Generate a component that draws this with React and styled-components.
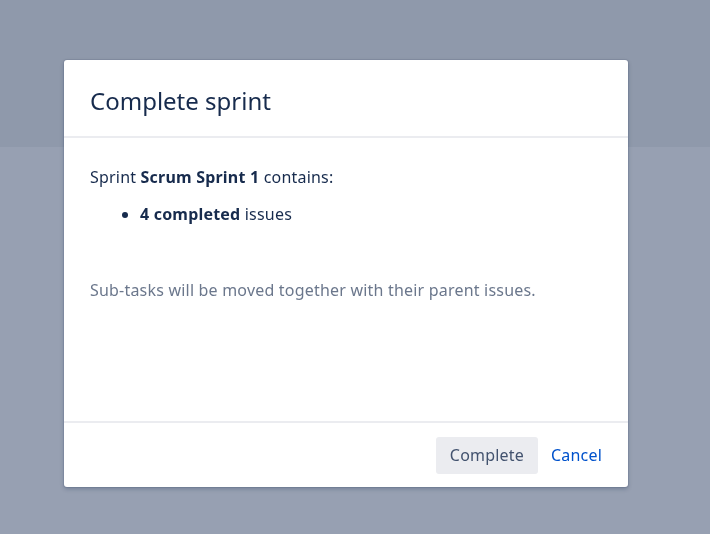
import React from 'react';
import styled, { createGlobalStyle } from 'styled-components';

const GlobalStyle = createGlobalStyle`
  html, body {
    margin: 0;
    padding: 0;
    height: 100%;
  }
  body {
    font-family: "Noto Sans", "Open Sans", sans-serif;
    background: #97a0b2;
  }
  #root {
    height: 100%;
  }
`;

const Page = styled.div`
  height: 100%;
  display: flex;
  flex-direction: column;
  background: #97a0b2;
`;

const PageHeader = styled.div`
  height: 147px;
  flex-shrink: 0;
  background: #8f99ab;
`;

const Dialog = styled.div`
  position: fixed;
  top: 60px;
  left: 64px;
  width: 564px;
  height: 427px;
  background: #fff;
  border-radius: 3px;
  box-shadow: 0 0 0 1px rgba(9, 30, 66, 0.08), 0 2px 4px rgba(9, 30, 66, 0.25);
  display: flex;
  flex-direction: column;
  color: #172b4d;
`;

const DialogHeader = styled.div`
  height: 78px;
  box-sizing: border-box;
  padding: 4px 26px 0;
  display: flex;
  align-items: center;
  border-bottom: 2px solid #ebecf0;
`;

const Title = styled.h2`
  margin: 0;
  font-size: 24px;
  font-weight: 400;
  color: #172b4d;
`;

const DialogBody = styled.div`
  flex: 1;
  padding: 27px 26px 0;
  font-size: 16px;
  line-height: 24px;
  letter-spacing: 0.2px;
`;

const Line = styled.p`
  margin: 0;
`;

const List = styled.ul`
  margin: 13px 0 0;
  padding-left: 50px;
`;

const Note = styled.p`
  margin: 52px 0 0;
  color: #6b778c;
`;

const DialogFooter = styled.div`
  height: 66px;
  box-sizing: border-box;
  border-top: 2px solid #ebecf0;
  display: flex;
  justify-content: flex-end;
  align-items: center;
  padding: 0 26px 0;
  gap: 13px;
`;

const Button = styled.button`
  font-family: inherit;
  font-size: 16px;
  letter-spacing: 0.2px;
  border: none;
  border-radius: 3px;
  height: 37px;
  padding: ${(p) => (p.$link ? '0' : '0 14px')};
  background: ${(p) => (p.$link ? 'transparent' : '#ebecf0')};
  color: ${(p) => (p.$link ? '#0052cc' : '#42526e')};
  cursor: pointer;
`;

export default function App() {
  return (
    <>
      <GlobalStyle />
      <Page>
        <PageHeader />
      </Page>
      <Dialog>
        <DialogHeader>
          <Title>Complete sprint</Title>
        </DialogHeader>
        <DialogBody>
          <Line>
            Sprint <b>Scrum Sprint 1</b> contains:
          </Line>
          <List>
            <li>
              <b>4 completed</b> issues
            </li>
          </List>
          <Note>Sub-tasks will be moved together with their parent issues.</Note>
        </DialogBody>
        <DialogFooter>
          <Button>Complete</Button>
          <Button $link>Cancel</Button>
        </DialogFooter>
      </Dialog>
    </>
  );
}
